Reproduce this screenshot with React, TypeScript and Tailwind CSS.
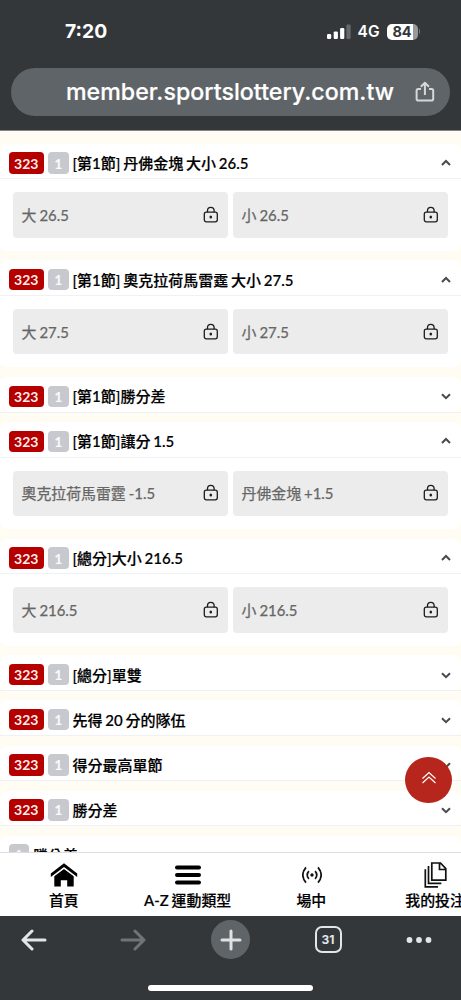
import React from 'react';

type Market = { title: string; code?: string; options?: string[] };

const markets: Market[] = [
  { title: '[第1節] 丹佛金塊 大小 26.5', code: '323', options: ['大 26.5', '小 26.5'] },
  { title: '[第1節] 奧克拉荷馬雷霆 大小 27.5', code: '323', options: ['大 27.5', '小 27.5'] },
  { title: '[第1節]勝分差', code: '323' },
  { title: '[第1節]讓分 1.5', code: '323', options: ['奧克拉荷馬雷霆 -1.5', '丹佛金塊 +1.5'] },
  { title: '[總分]大小 216.5', code: '323', options: ['大 216.5', '小 216.5'] },
  { title: '[總分]單雙', code: '323' },
  { title: '先得 20 分的隊伍', code: '323' },
  { title: '得分最高單節', code: '323' },
  { title: '勝分差', code: '323' },
  { title: '勝分差' },
];

function Lock() {
  return (
    <svg width="16" height="18" viewBox="0 0 16 18" fill="none" stroke="#1c1c1c" strokeWidth="1.3">
      <rect x="1.3" y="6.2" width="13" height="9.6" rx="2" />
      <path d="M4.5 6.2V4.6a3.3 3.3 0 0 1 6.6 0v1.6" />
      <ellipse cx="7.8" cy="11" rx="1.3" ry="1.6" fill="#1c1c1c" stroke="none" />
    </svg>
  );
}

function Chevron({ up }: { up: boolean }) {
  return (
    <svg width="10" height="8" viewBox="0 0 10 8" fill="none" stroke="#4a4a4a" strokeWidth="2">
      <path d={up ? 'M1 6 5 2l4 4' : 'M1 2.200l4 4 4-4'} />
    </svg>
  );
}

function MarketCard({ market }: { market: Market }) {
  return (
    <section className="shrink-0 rounded-lg bg-white">
      <div className="flex h-[35.5px] items-center border-b border-[#f0f0f7] pt-[4px] pr-[10px] pl-[8.5px]">
        {market.code && (
          <span className="mr-[4px] flex h-[21.5px] w-[35.5px] items-center justify-center rounded-[4px] bg-[#b60000] text-[14px] font-bold text-white/95">
            {market.code}
          </span>
        )}
        <span className="mr-[4px] flex h-[21.5px] w-[20.5px] items-center justify-center rounded-[4px] bg-[#c8c8cf] text-[14px] font-bold text-white/90">
          1
        </span>
        <h2 className="flex-1 text-[15px] leading-[20px] font-medium whitespace-pre text-black [-webkit-text-stroke:0.2px_black] [word-spacing:-1px]">
          {market.title}
        </h2>
        <Chevron up={!!market.options} />
      </div>
      {market.options && (
        <div className="grid h-[71.5px] grid-cols-2 gap-[5px] px-[13px] pt-[13px] pb-[13px]">
          {market.options.map((option) => (
            <button
              key={option}
              className="flex items-center justify-between rounded-[4px] bg-[#ececec] pr-[9.5px] pl-[8.5px] text-[14.9px] text-[#666] [-webkit-text-stroke:0.25px_#666] [word-spacing:-0.8px]"
            >
              <span>{option}</span>
              <Lock />
            </button>
          ))}
        </div>
      )}
    </section>
  );
}

function StatusBar() {
  return (
    <div className="flex h-[68px] items-center justify-between pr-[41px] pb-[5px] pl-[65px] font-['Inter'] text-white">
      <span className="text-[19.3px] font-bold">7:20</span>
      <div className="flex items-center">
        <svg width="24" height="16" viewBox="0 0 24 16" fill="white">
          <rect x="0" y="10" width="4.2" height="5" rx="1.2" />
          <rect x="6.7" y="7.4" width="4.2" height="7.6" rx="1.2" />
          <rect x="13.1" y="4" width="4.2" height="11" rx="1.2" />
          <rect x="19.4" y="0.5" width="4.2" height="14.5" rx="1.2" opacity=".25" />
        </svg>
        <span className="ml-[7px] text-[15.5px] font-semibold">4G</span>
        <span className="ml-[7px] flex h-[16px] w-[31px] items-center justify-center rounded-[5px] bg-linear-to-r from-white from-84% to-[#999] to-84% text-[14.5px] font-bold text-[#33373a]">
          84
        </span>
        <span className="ml-[1px] h-[5px] w-[1.5px] rounded-r-full bg-[#777]" />
      </div>
    </div>
  );
}

function AddressBar() {
  return (
    <div className="mx-[11px] flex h-[48px] items-center justify-end rounded-full bg-[#5f6468] pr-[15px] text-white">
      <span className="mr-[21px] font-['Inter'] text-[23.2px] font-medium tracking-[0.03px] [-webkit-text-stroke:0.2px_white]">
        member.sportslottery.com.tw
      </span>
      <svg width="20" height="22" viewBox="0 0 20 22" fill="none" stroke="#d5d7d9" strokeWidth="2" strokeLinejoin="round">
        <path d="M6 8H3.2Q1.6 8 1.6 9.6v8.2q0 1.8 1.8 1.8h13q1.8 0 1.8-1.8V9.6Q18.200 8 16.6 8H14" />
        <path d="M9.900 14V2.200M5.800 5.800 9.900 1.700l4.100 4.100" />
      </svg>
    </div>
  );
}

function HomeIcon() {
  return (
    <svg width="28" height="24" viewBox="0 0 28 24" fill="black">
      <path d="M14 .3.800 10.600v3.400L14 4l13.200 10v-3.400z" />
      <path d="M14 6 4.300 13.300v10.200h6.500v-6.300h6.400v6.300h6.500V13.300z" />
    </svg>
  );
}

function MenuIcon() {
  return (
    <svg width="28" height="20" viewBox="0 0 28 20" stroke="black" strokeWidth="4" strokeLinecap="round">
      <path d="M3 2.400h22M3 9.900h22M3 17.400h22" />
    </svg>
  );
}

function LiveIcon() {
  return (
    <svg width="20" height="18" viewBox="0 0 20 18" fill="none" stroke="#111" strokeWidth="1.700" className="ml-px">
      <circle cx="10" cy="9" r="1.700" fill="#111" stroke="none" />
      <path d="M6.900 5.100q-3.400 3.900 0 7.800M13.100 5.100q3.400 3.900 0 7.800M4 1.400q-6.400 7.600 0 15.200M16 1.400q6.400 7.600 0 15.200" />
    </svg>
  );
}

function BetsIcon() {
  return (
    <svg width="23" height="26" viewBox="0 0 23 26" fill="none" stroke="#111" strokeWidth="1.700">
      <path d="M7.800 1h8.700l5.300 5.600v11.600h-14zM15.500 1v6.500h6.300M4.500 4v17.400h12.800M1.300 7.200v17.600H14" />
    </svg>
  );
}

const tabs = [
  { label: '首頁', icon: <HomeIcon /> },
  { label: 'A-Z 運動類型', icon: <MenuIcon /> },
  { label: '場中', icon: <LiveIcon /> },
  { label: '我的投注', icon: <BetsIcon /> },
];

function SiteNav() {
  return (
    <nav className="h-[64px] shrink-0 overflow-hidden border-t border-[#dedede] bg-white">
      <div className="grid w-[497px] grid-cols-4 pl-[2px]">
        {tabs.map((tab) => (
          <div key={tab.label} className="flex flex-col items-center">
            <div className="flex h-[37px] items-center pt-[6px]">{tab.icon}</div>
            <span className="text-[14.9px] leading-[20px] font-medium whitespace-nowrap text-black [-webkit-text-stroke:0.2px_black] [word-spacing:-0.8px]">
              {tab.label}
            </span>
          </div>
        ))}
      </div>
    </nav>
  );
}

function BrowserToolbar() {
  return (
    <footer className="flex h-[84px] shrink-0 flex-col items-center justify-between bg-[#33373a] pt-[4px] pb-[9px]">
      <div className="flex h-[39px] w-full items-center justify-between pr-[29px] pl-[21px]">
        <svg width="26" height="22" viewBox="0 0 26 22" fill="none" stroke="#e3e6e9" strokeWidth="3" strokeLinecap="round" strokeLinejoin="round">
          <path d="M24 11H2.500M11 2 2 11l9 9" />
        </svg>
        <svg width="26" height="22" viewBox="0 0 26 22" fill="none" stroke="#707477" strokeWidth="3" strokeLinecap="round" strokeLinejoin="round" className="ml-[24px]">
          <path d="M2 11h21.500M15 2l9 9-9 9" />
        </svg>
        <span className="ml-[17px] flex size-[39px] items-center justify-center rounded-full bg-[#5f6468]">
          <svg width="22" height="22" viewBox="0 0 22 22" stroke="#dfe1e4" strokeWidth="3" strokeLinecap="round">
            <path d="M2 11h18M11 2v18" />
          </svg>
        </span>
        <span className="ml-[16px] flex size-[27px] items-center justify-center rounded-[7px] border-[2.5px] border-[#e3e6e9] font-['Inter'] text-[12px] font-bold text-[#e3e6e9]">
          31
        </span>
        <svg width="26" height="8" viewBox="0 0 26 8" fill="#e3e6e9" className="ml-[16px]">
          <circle cx="3.500" cy="4" r="2.900" />
          <circle cx="13" cy="4" r="2.900" />
          <circle cx="22.500" cy="4" r="2.900" />
        </svg>
      </div>
      <span className="h-[6px] w-[165px] rounded-full bg-white" />
    </footer>
  );
}

export default function App() {
  return (
    <div className="relative flex h-[1000px] w-[461px] flex-col overflow-hidden bg-[#33373a] font-['Lato','Noto_Sans_CJK_TC',sans-serif]">
      <header className="h-[130px] shrink-0">
        <StatusBar />
        <AddressBar />
      </header>
      <main className="flex min-h-0 flex-1 flex-col gap-[9.600px] overflow-hidden border-t border-[#858385] bg-[#fffdf3] pt-[12.900px]">
        {markets.map((market, i) => (
          <MarketCard key={i} market={market} />
        ))}
      </main>
      <button className="absolute top-[756.500px] left-[405px] flex size-[46.500px] items-center justify-center rounded-full bg-[#b7261c]">
        <svg width="16" height="14" viewBox="0 0 16 14" fill="none" stroke="white" strokeWidth="1.200" className="mb-[3px] ml-px">
          <path d="M1.500 7.500 8 1.500l6.500 6M1.500 12 8 6l6.500 6" />
        </svg>
      </button>
      <SiteNav />
      <BrowserToolbar />
    </div>
  );
}
